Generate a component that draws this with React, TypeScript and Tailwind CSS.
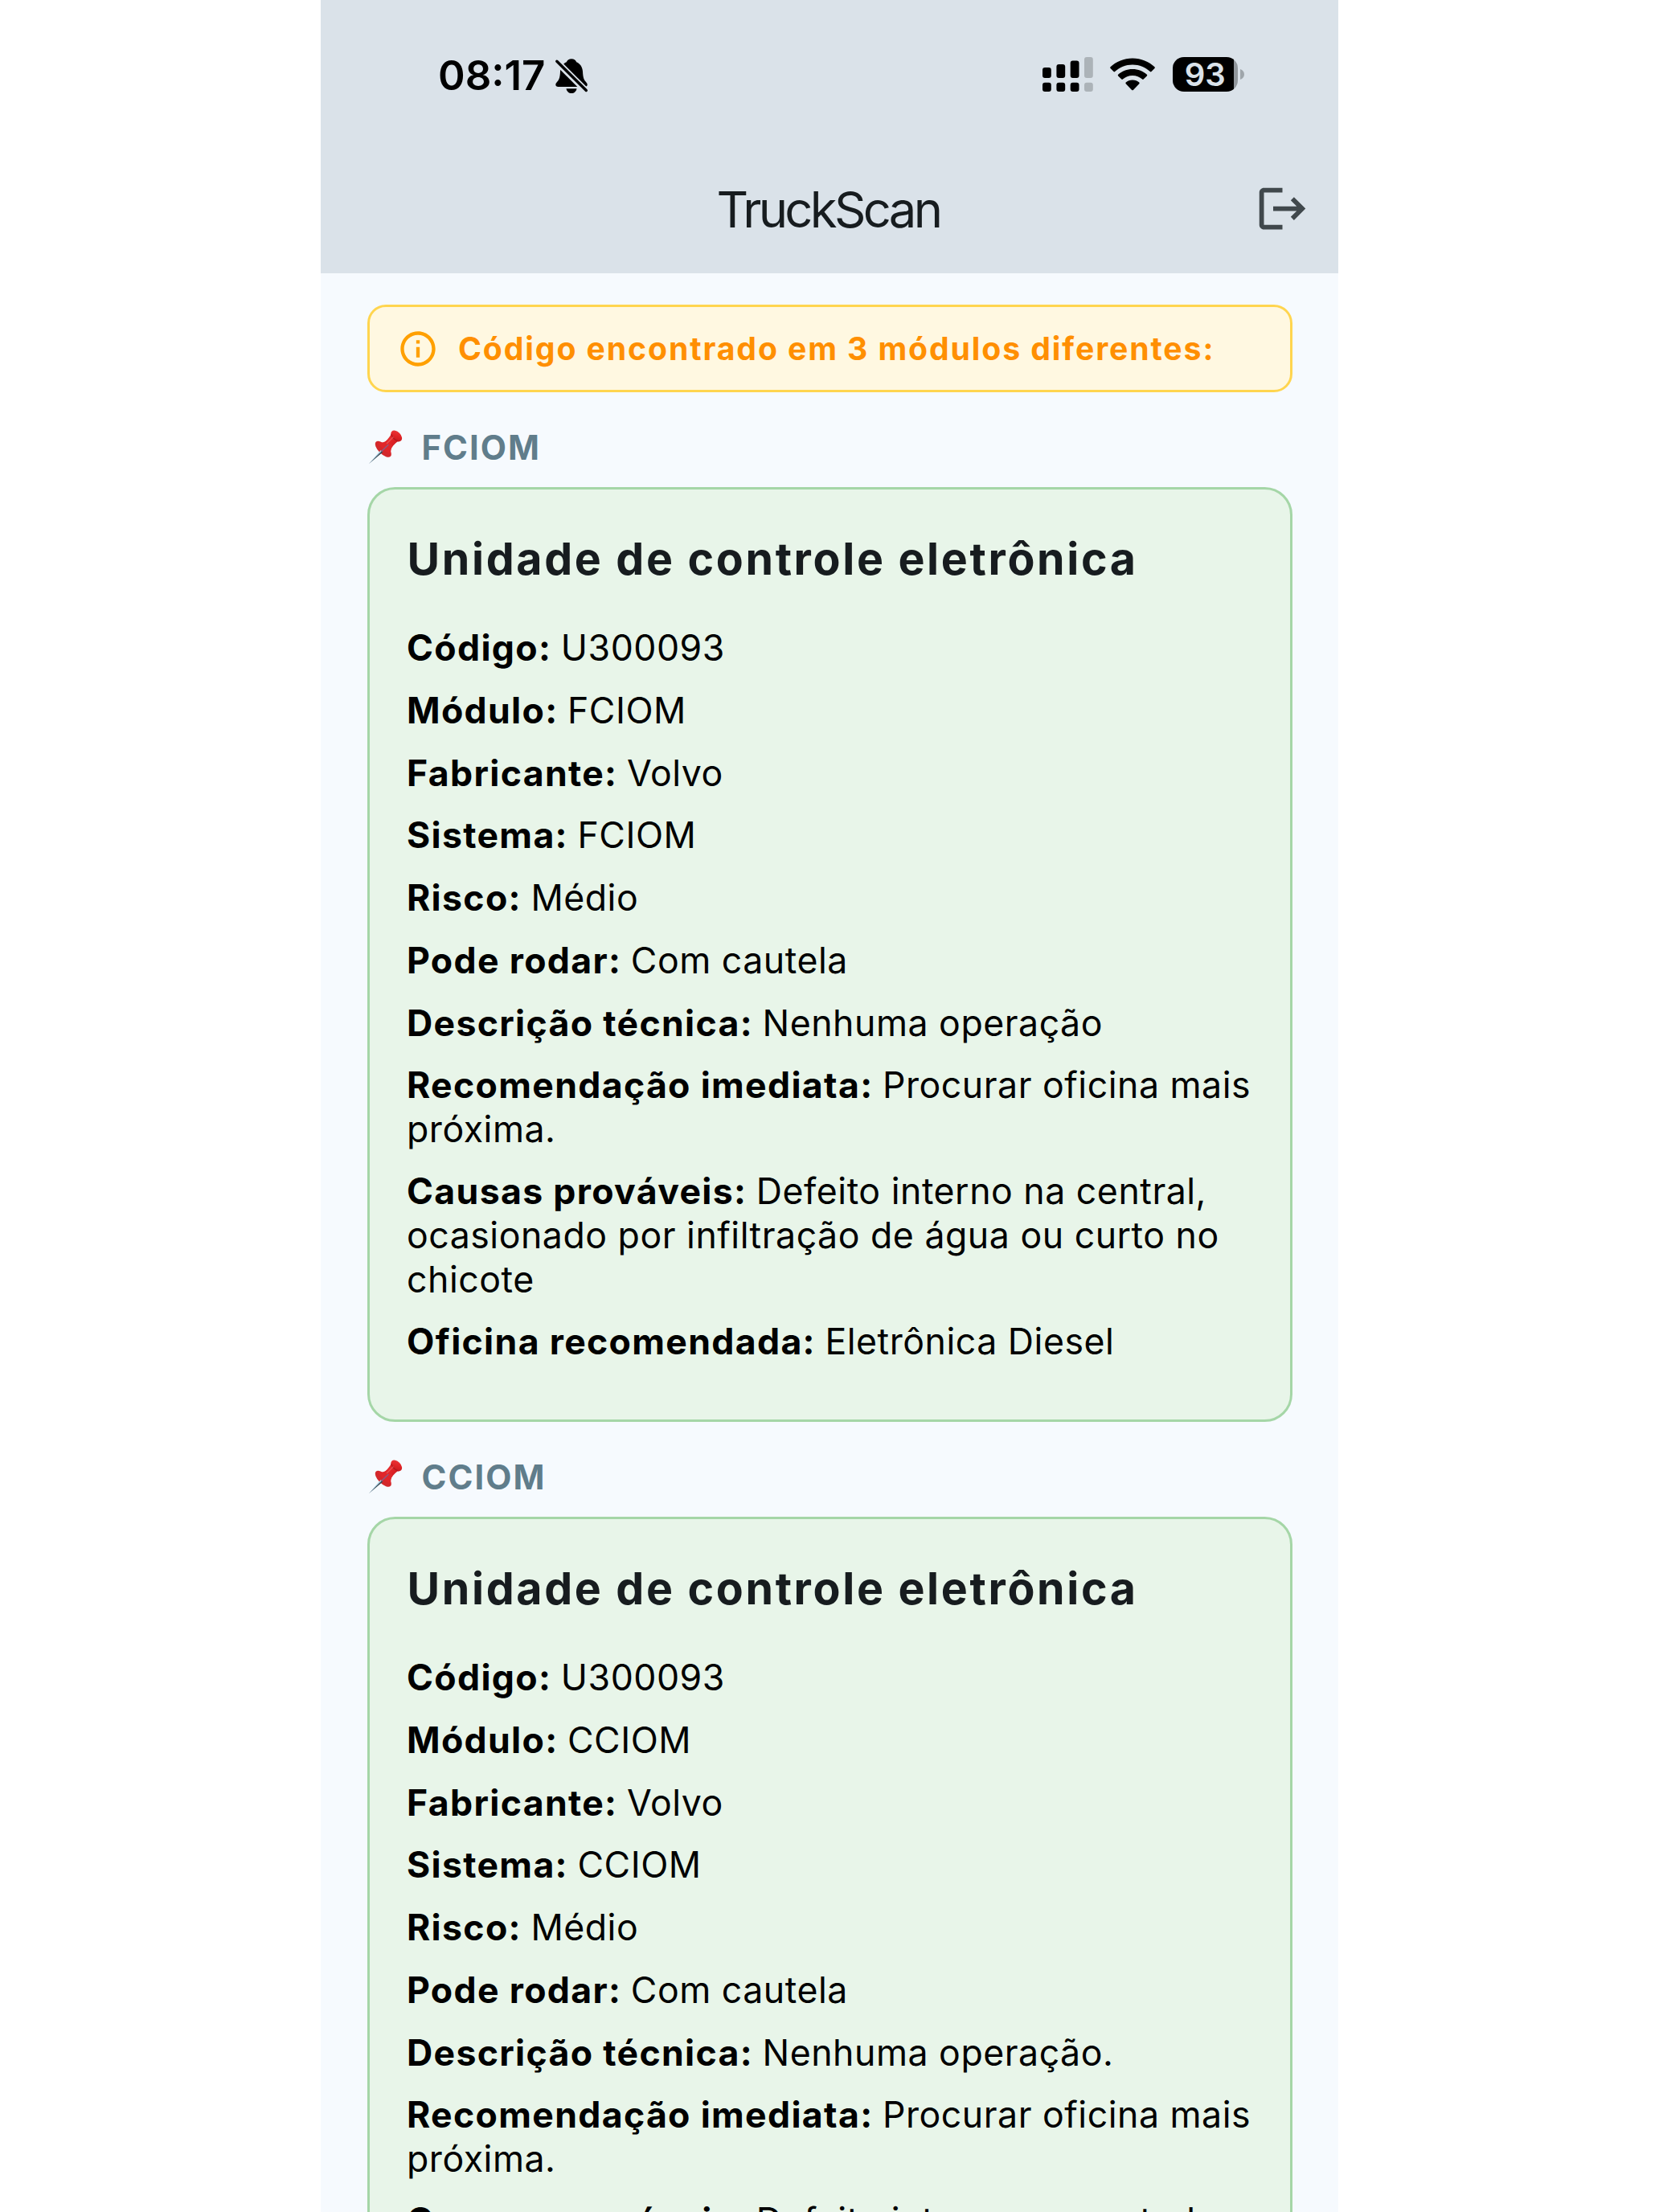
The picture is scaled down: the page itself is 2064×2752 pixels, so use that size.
import React from "react";

type Row = { label: string; value: string };
type Module = { name: string; title: string; rows: Row[] };

function makeModule(name: string, description: string): Module {
  return {
    name,
    title: "Unidade de controle eletrônica",
    rows: [
      { label: "Código:", value: "U300093" },
      { label: "Módulo:", value: name },
      { label: "Fabricante:", value: "Volvo" },
      { label: "Sistema:", value: name },
      { label: "Risco:", value: "Médio" },
      { label: "Pode rodar:", value: "Com cautela" },
      { label: "Descrição técnica:", value: description },
      { label: "Recomendação imediata:", value: "Procurar oficina mais próxima." },
      {
        label: "Causas prováveis:",
        value: "Defeito interno na central, ocasionado por infiltração de água ou curto no chicote",
      },
      { label: "Oficina recomendada:", value: "Eletrônica Diesel" },
    ],
  };
}

const modules = [makeModule("FCIOM", "Nenhuma operação"), makeModule("CCIOM", "Nenhuma operação.")];

function BellOff() {
  return (
    <svg className="h-[46px] w-[42px]" viewBox="0 0 42 46" fill="none">
      <path
        d="M21 2.2c-2.9 0-5.200 1.500-6.200 4C10 8.200 7.300 12.500 7 18c-.3 6-.9 9.500-3.400 12.300-1.500 1.700-2.300 2.700-2.300 4 0 1.700 1.200 2.700 3.200 2.700h33c2 0 3.200-1 3.200-2.700 0-1.300-.8-2.300-2.300-4C35.900 27.500 35.300 24 35 18c-.3-5.500-3-9.800-7.800-11.800-1-2.500-3.300-4-6.200-4z"
        fill="#000"
      />
      <path d="M14.500 39.200h13c-.6 3.500-3.200 5.800-6.500 5.800s-5.900-2.300-6.500-5.800z" fill="#000" />
      <path d="M-1 2 L41 44" stroke="#dae2e9" strokeWidth="8" />
      <path d="M2.800 5.200 L39.300 41.500" stroke="#000" strokeWidth="3.400" strokeLinecap="round" />
    </svg>
  );
}

function Signal() {
  const bars = [
    { x: 0, y: 13 },
    { x: 17.4, y: 9 },
    { x: 34.7, y: 4.4 },
    { x: 52, y: 0 },
  ];
  return (
    <svg className="h-[43px] w-[63px]" viewBox="0 0 63 43">
      {bars.map((b, i) => (
        <g key={b.x} fill={i === 3 ? "#acb3b8" : "#000"}>
          <rect x={b.x} y={b.y} width="10.8" height={26 - b.y} rx="3" />
          <rect x={b.x} y="31.700" width="10.8" height="11.300" rx="3" />
        </g>
      ))}
    </svg>
  );
}

function Wifi() {
  return (
    <svg className="h-[41px] w-[56px]" viewBox="0 0 56 41">
      <path d="M28 0.500C17.300 0.500 7.600 4.600 0.500 11.300c-.5.500-.5 1.100 0 1.600l4 4.100c.5.500 1.100.5 1.600 0C11.900 11.800 19.500 8.500 28 8.500s16.100 3.300 21.900 8.500c.5.500 1.100.5 1.600 0l4-4.100c.5-.5.5-1.100 0-1.600C48.400 4.600 38.700.5 28 .5z" />
      <path d="M28 13.900c-6.900 0-13.200 2.600-17.900 6.900-.5.500-.5 1.100 0 1.600l4.200 4.200c.5.500 1 .5 1.600 0 3.200-2.900 7.400-4.600 12.100-4.600s8.900 1.700 12.100 4.600c.6.500 1.100.5 1.600 0l4.200-4.200c.5-.5.5-1.100 0-1.600-4.700-4.300-11-6.900-17.900-6.900z" />
      <path d="M28 27.400c-3.200 0-6.100 1.200-8.300 3.200-.5.500-.5 1.100 0 1.600l7.400 7.700c.5.500 1.300.5 1.800 0l7.400-7.700c.5-.5.5-1.100 0-1.600-2.200-2-5.100-3.200-8.300-3.200z" />
    </svg>
  );
}

function Battery() {
  return (
    <div className="flex items-center gap-[3px]">
      <div className="flex h-[43px] w-[81.500px] items-center justify-center rounded-[14px] bg-[linear-gradient(90deg,#000_0_76px,#92989d_76px)]">
        <span className="text-[40px] leading-[43px] font-semibold text-[#dae2e9]">93</span>
      </div>
      <svg className="h-[13px] w-[5px]" viewBox="0 0 5 13">
        <path d="M0 0c3 .8 5 3.400 5 6.500s-2 5.700-5 6.500z" fill="#9fa6ab" />
      </svg>
    </div>
  );
}

function Pushpin() {
  return (
    <svg className="-ml-px mr-px h-[43px] w-[43px]" viewBox="0 0 43 43">
      <defs>
        <linearGradient id="pinRed" x1="0" y1="0" x2="1" y2="1">
          <stop offset="0" stopColor="#ee3b3d" />
          <stop offset="0.5" stopColor="#e02427" />
          <stop offset="1" stopColor="#bf171c" />
        </linearGradient>
      </defs>
      <path d="M18 17 C22 14.500 26 10 28.500 5.500 L37 14 C32.500 17.500 29 21 27.500 26 Z" fill="url(#pinRed)" />
      <ellipse cx="35.200" cy="7.500" rx="8.200" ry="5.300" transform="rotate(45 35.200 7.500)" fill="url(#pinRed)" />
      <path d="M28.800 5 C30 9.500 33 12.500 37.500 13.800" stroke="#b3181e" strokeWidth="1.200" fill="none" />
      <ellipse cx="18.800" cy="23.800" rx="12.800" ry="6" transform="rotate(45 18.800 23.800)" fill="#d3282b" />
      <path
        d="M12 15.500 C18 16 21.500 14.800 24 12.500 L30.500 19.500 C28.500 22.500 28 26 28.200 30 C22.500 28 16 22 12 15.500 Z"
        fill="#e0262a"
      />
      <path d="M31 9 L23.500 16.500" stroke="#f26a6a" strokeWidth="1.500" strokeLinecap="round" opacity="0.6" />
      <path d="M15.800 25 L18 27.200 L1 42 Z" fill="#a9cbe0" />
      <path d="M17 26.200 L18.200 27.400 L1 42 Z" fill="#35424a" />
      <path d="M16.800 26.300 L25 18.500" stroke="#8c5a80" strokeWidth="1.500" strokeLinecap="round" />
    </svg>
  );
}

function StatusBar() {
  return (
    <div className="flex h-[187px] items-start justify-between pt-[68px] pr-[117px] pl-[146px]">
      <div className="flex items-center gap-[11px]">
        <span className="text-[51px] leading-[51px] font-semibold text-black">08:17</span>
        <BellOff />
      </div>
      <div className="flex items-center gap-[21.500px] pt-[3px]">
        <Signal />
        <Wifi />
        <Battery />
      </div>
    </div>
  );
}

function AppBar() {
  return (
    <div className="grid h-[153px] grid-cols-[1fr_auto_1fr] items-center pb-[9px]">
      <span />
      <h1 className="-ml-[3px] pt-[3px] text-[61.500px] leading-none tracking-[-3.650px] text-[#171c1f]">TruckScan</h1>
      <svg className="mr-[35px] h-[69px] w-[69px] justify-self-end" viewBox="0 0 24 24" fill="#40484c">
        <path d="m17 7-1.410 1.410L18.170 11H8v2h10.170l-2.580 2.580L17 17l5-5zM4 5h8V3H4c-1.100 0-2 .9-2 2v14c0 1.100.9 2 2 2h8v-2H4z" />
      </svg>
    </div>
  );
}

function Notice() {
  return (
    <div className="flex h-[109px] items-center gap-[24px] rounded-[23px] border-[3px] border-[#ffd54f] bg-[#fff8e1] pl-[34.500px]">
      <svg className="h-[52px] w-[52px]" viewBox="0 0 24 24" fill="#ffa000">
        <path d="M11 7h2v2h-2zm0 4h2v6h-2zm1-9C6.480 2 2 6.480 2 12s4.480 10 10 10 10-4.480 10-10S17.520 2 12 2m0 18c-4.410 0-8-3.590-8-8s3.590-8 8-8 8 3.590 8 8-3.590 8-8 8" />
      </svg>
      <span className="pt-px text-[39.200px] font-bold tracking-[1.880px] text-[#ff8f00]">
        Código encontrado em 3 módulos diferentes:
      </span>
    </div>
  );
}

function ModuleSection({ module }: { module: Module }) {
  return (
    <section>
      <div className="flex h-[118px] items-center gap-[23px] pt-[39px] pb-[20px] pl-[2px]">
        <Pushpin />
        <h2 className="text-[41.800px] leading-[54px] font-bold tracking-[2.050px] text-[#607d8b]">{module.name}</h2>
      </div>
      <div className="h-[1163px] rounded-[34.500px] border-[3px] border-[#a5d6a7] bg-[#e8f5e9] px-[46px] pt-[45px]">
        <h3 className="mb-[43.400px] ml-px text-[55.500px] leading-[82px] font-bold tracking-[2.650px] text-[#171c1f]">
          {module.title}
        </h3>
        <div className="-mr-[8px] ml-[0.500px] flex flex-col gap-[23.100px] text-[44.600px] leading-[54.600px] font-normal tracking-[0.530px] text-black">
          {module.rows.map((row) => (
            <p key={row.label}>
              <b className="-mr-[1.500px] font-bold tracking-[1.330px]">{row.label}</b> {row.value}
            </p>
          ))}
        </div>
      </div>
    </section>
  );
}

export default function App() {
  return (
    <div className="flex h-[2752px] justify-center overflow-hidden bg-white font-['Inter',sans-serif]">
      <div className="flex w-[1266px] flex-col bg-[#f6fafe]">
        <header className="h-[340px] shrink-0 bg-[#dae2e9]">
          <StatusBar />
          <AppBar />
        </header>
        <main className="px-[57.500px] pt-[39px]">
          <Notice />
          {modules.map((m) => (
            <ModuleSection key={m.name} module={m} />
          ))}
        </main>
      </div>
    </div>
  );
}
